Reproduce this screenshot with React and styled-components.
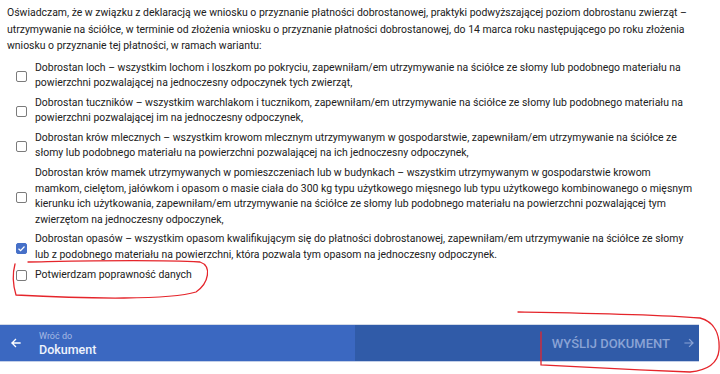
import React from "react";
import styled, { createGlobalStyle } from "styled-components";

const GlobalStyle = createGlobalStyle`
  html, body { margin: 0; padding: 0; background: #ffffff; }
  body { font-family: Roboto, "Noto Sans", "Liberation Sans", sans-serif; }
  * { box-sizing: border-box; }
`;

const Page = styled.div`
  position: relative;
  width: 720px;
  height: 374px;
  overflow: hidden;
`;

const Column = styled.div`
  width: 699px;
  height: 374px;
  padding-bottom: 12px;
  display: flex;
  flex-direction: column;
`;

const Content = styled.div`
  padding: 5px 1px 0 7px;
  font-size: 10.45px;
  color: #212121;
`;

const Intro = styled.p`
  margin: 0 0 5px 0;
  line-height: 16.5px;
`;

const Line = styled.span`
  display: block;
  white-space: nowrap;
`;

const List = styled.div`
  display: flex;
  flex-direction: column;
  gap: 4px;
  line-height: 15.6px;
`;

const Item = styled.label`
  display: flex;
  align-items: center;
  gap: 8px;
  padding-left: 9px;
`;

const Box = styled.span`
  flex: 0 0 11px;
  width: 11px;
  height: 11px;
  border-radius: 2px;
  border: 1.5px solid ${(p) => (p.$checked ? "#4670c8" : "#7b7b7b")};
  background: ${(p) => (p.$checked ? "#4670c8" : "#ffffff")};
  display: flex;
  align-items: center;
  justify-content: center;
  margin-top: 2px;
`;

const ItemText = styled.span`
  flex: 1;
`;

const Footer = styled.div`
  margin-top: auto;
  display: flex;
  height: 38px;
  border-top: 1px solid #d3dae7;
  border-bottom: 1px solid #c3cfe8;
`;

const BackPanel = styled.div`
  width: 355px;
  background: #3b68c1;
  display: flex;
  align-items: center;
  gap: 17px;
  padding-left: 10px;
`;

const BackLabels = styled.div`
  display: flex;
  flex-direction: column;
  padding-top: 1px;
`;

const Small = styled.span`
  font-size: 9px;
  line-height: 11px;
  color: #a7bbe4;
`;

const Title = styled.span`
  font-size: 12.5px;
  line-height: 15px;
  color: #eef3fc;
  font-weight: 500;
`;

const SendPanel = styled.div`
  flex: 1;
  background: #305ba8;
  display: flex;
  align-items: center;
  justify-content: flex-end;
  gap: 13px;
  padding-right: 4px;
`;

const SendLabel = styled.span`
  font-size: 13px;
  font-weight: 500;
  color: #8aa3d5;
  text-transform: uppercase;
`;

const Overlay = styled.svg`
  position: absolute;
  left: 0;
  top: 0;
  width: 720px;
  height: 374px;
  pointer-events: none;
`;

const Check = ({ checked }) => (
  <Box $checked={checked}>
    {checked && (
      <svg width="9" height="9" viewBox="0 0 12 12">
        <path d="M2 6.3 L4.8 9 L10 3.3" fill="none" stroke="#fff" strokeWidth="1.6" />
      </svg>
    )}
  </Box>
);

const intro = [
  "Oświadczam, że w związku z deklaracją we wniosku o przyznanie płatności dobrostanowej, praktyki podwyższającej poziom dobrostanu zwierząt –",
  "utrzymywanie na ściółce, w terminie od złożenia wniosku o przyznanie płatności dobrostanowej, do 14 marca roku następującego po roku złożenia",
  "wniosku o przyznanie tej płatności, w ramach wariantu:",
];

const items = [
  {
    lines: [
      "Dobrostan loch – wszystkim lochom i loszkom po pokryciu, zapewniłam/em utrzymywanie na ściółce ze słomy lub podobnego materiału na",
      "powierzchni pozwalającej na jednoczesny odpoczynek tych zwierząt,",
    ],
  },
  {
    lines: [
      "Dobrostan tuczników – wszystkim warchlakom i tucznikom, zapewniłam/em utrzymywanie na ściółce ze słomy lub podobnego materiału na",
      "powierzchni pozwalającej im na jednoczesny odpoczynek,",
    ],
  },
  {
    lines: [
      "Dobrostan krów mlecznych – wszystkim krowom mlecznym utrzymywanym w gospodarstwie, zapewniłam/em utrzymywanie na ściółce ze",
      "słomy lub podobnego materiału na powierzchni pozwalającej na ich jednoczesny odpoczynek,",
    ],
  },
  {
    lines: [
      "Dobrostan krów mamek utrzymywanych w pomieszczeniach lub w budynkach – wszystkim utrzymywanym w gospodarstwie krowom",
      "mamkom, cielętom, jałówkom i opasom o masie ciała do 300 kg typu użytkowego mięsnego lub typu użytkowego kombinowanego o mięsnym",
      "kierunku ich użytkowania, zapewniłam/em utrzymywanie na ściółce ze słomy lub podobnego materiału na powierzchni pozwalającej tym",
      "zwierzętom na jednoczesny odpoczynek,",
    ],
  },
  {
    checked: true,
    lines: [
      "Dobrostan opasów – wszystkim opasom kwalifikującym się do płatności dobrostanowej, zapewniłam/em utrzymywanie na ściółce ze słomy",
      "lub z podobnego materiału na powierzchni, która pozwala tym opasom na jednoczesny odpoczynek.",
    ],
  },
  { lines: ["Potwierdzam poprawność danych"] },
];

export default function App() {
  return (
    <Page>
      <GlobalStyle />
      <Column>
        <Content>
          <Intro>
            {intro.map((l, i) => (
              <Line key={i}>{l}</Line>
            ))}
          </Intro>
          <List>
            {items.map((it, i) => (
              <Item key={i}>
                <Check checked={!!it.checked} />
                <ItemText>
                  {it.lines.map((l, j) => (
                    <Line key={j}>{l}</Line>
                  ))}
                </ItemText>
              </Item>
            ))}
          </List>
        </Content>
        <Footer>
          <BackPanel>
            <svg width="12" height="12" viewBox="0 0 24 24">
              <path d="M20 12H4M11 5l-7 7 7 7" fill="none" stroke="#ffffff" strokeWidth="2.6" strokeLinecap="square" />
            </svg>
            <BackLabels>
              <Small>Wróć do</Small>
              <Title>Dokument</Title>
            </BackLabels>
          </BackPanel>
          <SendPanel>
            <SendLabel>Wyślij dokument</SendLabel>
            <svg width="12" height="12" viewBox="0 0 24 24">
              <path d="M4 12h16M13 5l7 7-7 7" fill="none" stroke="#8aa3d5" strokeWidth="2.4" strokeLinecap="square" />
            </svg>
          </SendPanel>
        </Footer>
      </Column>
      <Overlay viewBox="0 0 720 374">
        <path
          d="M28 262 C 80 261, 150 259, 200 262 C 212 266, 209 283, 196 292 C 170 300, 90 299, 16 295 C 13 285, 12 275, 15 264"
          fill="none" stroke="#e5252b" strokeWidth="1.3" strokeLinecap="round"
        />
        <path
          d="M518 312 C 580 313, 650 314, 700 318 C 715 322, 720 335, 719 350 C 718 362, 710 370, 690 372 C 640 370, 580 367, 541 365 L 541 332"
          fill="none" stroke="#e5252b" strokeWidth="1.3" strokeLinecap="round"
        />
      </Overlay>
    </Page>
  );
}
